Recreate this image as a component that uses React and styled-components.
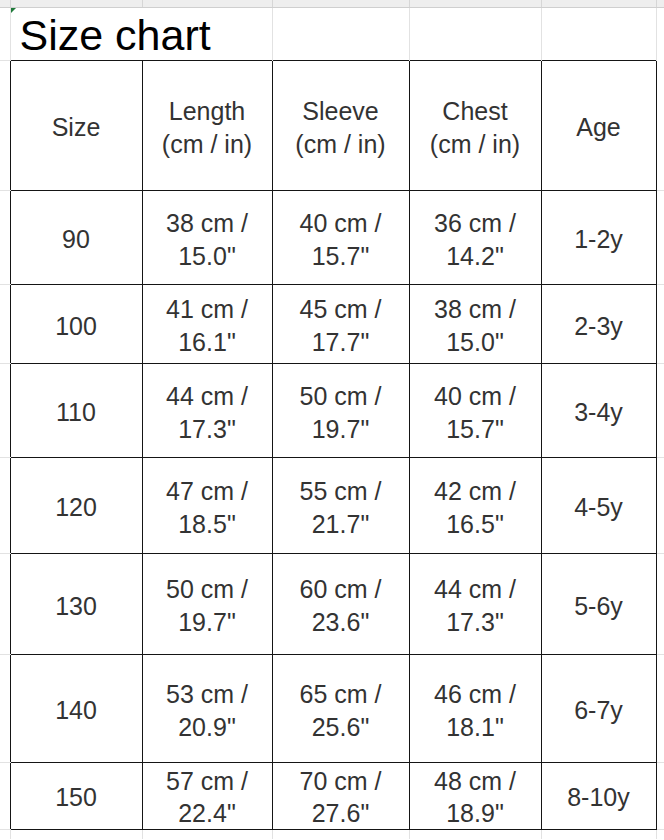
import React from "react"
import styled, { createGlobalStyle } from "styled-components"

const GlobalStyle = createGlobalStyle`
  html, body {
    margin: 0;
    padding: 0;
    background: #ffffff;
  }
  body {
    font-family: "Liberation Sans", Arial, sans-serif;
  }
`

const Sheet = styled.table`
  width: 664px;
  border-collapse: collapse;
  table-layout: fixed;
  font-family: "Liberation Sans", Arial, sans-serif;
`

const Row = styled.tr`
  height: ${({ $h }) => $h}px;
`

const StripCell = styled.th`
  padding: 0;
  height: 7px;
  background: #eeeeee;
  border-right: 1px solid #d6d6d6;
  border-bottom: 1px solid #cfcfcf;
`

const Gutter = styled.td`
  padding: 0;
  border-bottom: ${({ $last }) => ($last ? "none" : "1px solid #e2e2e2")};
  border-right: ${({ $open }) => ($open ? "1px solid #e2e2e2" : "none")};
`

const GridCell = styled.td`
  padding: 0;
  border-right: 1px solid #e2e2e2;
`

const TitleCell = styled.td`
  position: relative;
  padding: 0 0 3px 9px;
  vertical-align: bottom;
  white-space: nowrap;
  font-size: 43px;
  line-height: 43px;
  color: #000;
  border-right: 1px solid #e2e2e2;
`

const Marker = styled.span`
  position: absolute;
  top: 0;
  left: 0;
  width: 0;
  height: 0;
  border-top: 5px solid #1f7a3a;
  border-right: 5px solid transparent;
`

const Cell = styled.td`
  padding: ${({ $tight }) => ($tight ? "1px 0 0" : "4px 0 0")};
  border: 1px solid #151515;
  text-align: center;
  vertical-align: middle;
  font-size: 25px;
  line-height: ${({ $tight }) => ($tight ? "32px" : "33px")};
  color: #333333;
  white-space: nowrap;
`

const columns = [10, 132, 130, 137, 132, 115, 8]

const headers = [
  ["Size"],
  ["Length", "(cm / in)"],
  ["Sleeve", "(cm / in)"],
  ["Chest", "(cm / in)"],
  ["Age"],
]

const rows = [
  { size: "90", len: [38, "15.0"], sleeve: [40, "15.7"], chest: [36, "14.2"], age: "1-2y", h: 94 },
  { size: "100", len: [41, "16.1"], sleeve: [45, "17.7"], chest: [38, "15.0"], age: "2-3y", h: 79 },
  { size: "110", len: [44, "17.3"], sleeve: [50, "19.7"], chest: [40, "15.7"], age: "3-4y", h: 94 },
  { size: "120", len: [47, "18.5"], sleeve: [55, "21.7"], chest: [42, "16.5"], age: "4-5y", h: 96 },
  { size: "130", len: [50, "19.7"], sleeve: [60, "23.6"], chest: [44, "17.3"], age: "5-6y", h: 101 },
  { size: "140", len: [53, "20.9"], sleeve: [65, "25.6"], chest: [46, "18.1"], age: "6-7y", h: 108 },
  { size: "150", len: [57, "22.4"], sleeve: [70, "27.6"], chest: [48, "18.9"], age: "8-10y", h: 67 },
]

function Measure({ pair, tight }) {
  return (
    <Cell $tight={tight}>
      {pair[0]} cm /
      <br />
      {pair[1]}"
    </Cell>
  )
}

export default function App() {
  return (
    <>
      <GlobalStyle />
      <Sheet>
        <colgroup>
          {columns.map((w, i) => (
            <col key={i} style={{ width: w }} />
          ))}
        </colgroup>
        <thead>
          <tr>
            {columns.map((_, i) => (
              <StripCell key={i} />
            ))}
          </tr>
        </thead>
        <tbody>
          <Row $h={53}>
            <Gutter $open />
            <TitleCell colSpan={2}>
              <Marker />
              Size chart
            </TitleCell>
            <GridCell />
            <GridCell />
            <GridCell />
            <Gutter $last />
          </Row>
          <Row $h={130}>
            <Gutter />
            {headers.map((lines, i) => (
              <Cell key={i}>
                {lines.map((l, j) => (
                  <React.Fragment key={j}>
                    {j > 0 && <br />}
                    {l}
                  </React.Fragment>
                ))}
              </Cell>
            ))}
            <Gutter />
          </Row>
          {rows.map((r) => {
            const tight = r.h < 70
            return (
              <Row key={r.size} $h={r.h}>
                <Gutter />
                <Cell $tight={tight}>{r.size}</Cell>
                <Measure pair={r.len} tight={tight} />
                <Measure pair={r.sleeve} tight={tight} />
                <Measure pair={r.chest} tight={tight} />
                <Cell $tight={tight}>{r.age}</Cell>
                <Gutter />
              </Row>
            )
          })}
          <Row $h={9}>
            <Gutter $open $last />
            <GridCell />
            <GridCell />
            <GridCell />
            <GridCell />
            <GridCell />
            <Gutter $last />
          </Row>
        </tbody>
      </Sheet>
    </>
  )
}
